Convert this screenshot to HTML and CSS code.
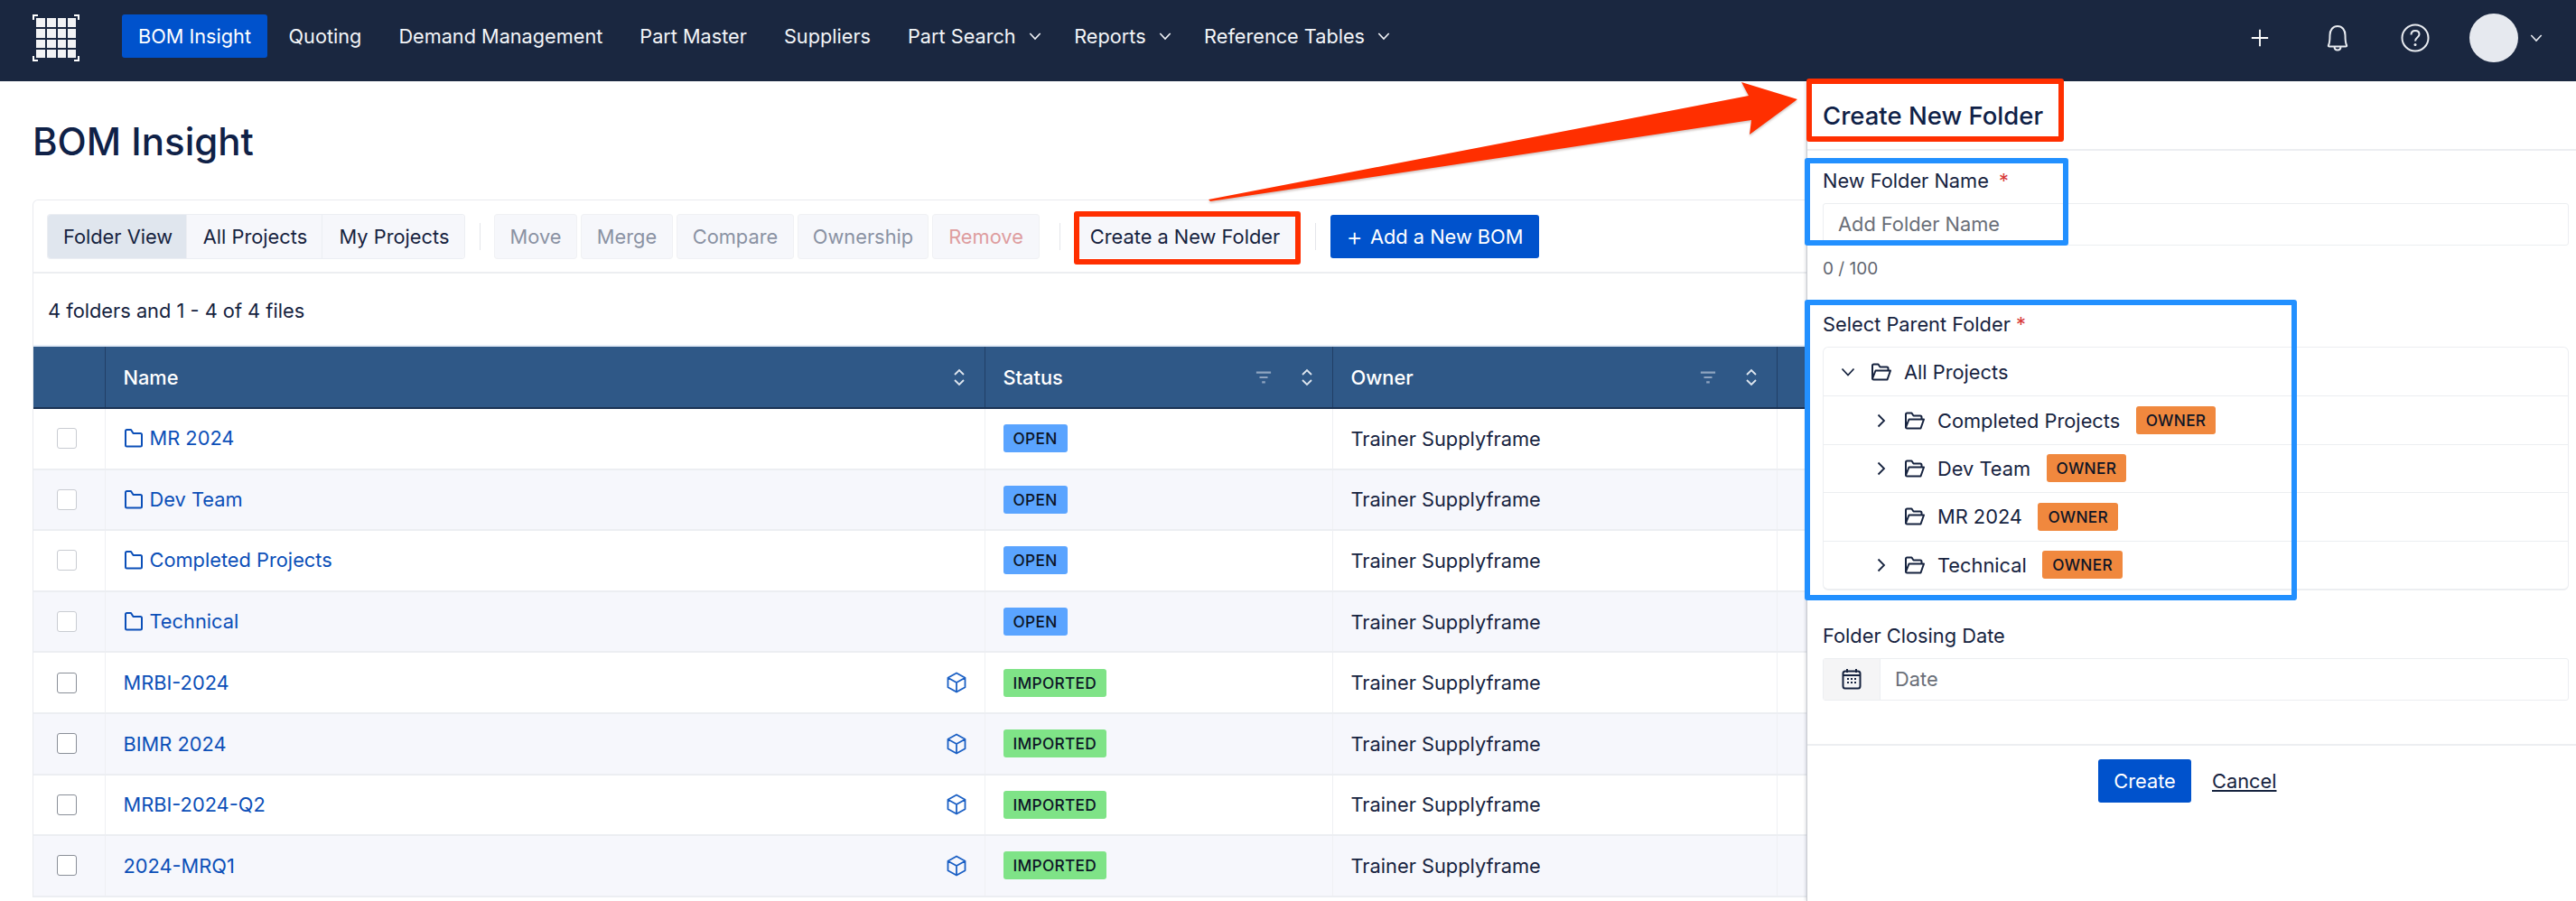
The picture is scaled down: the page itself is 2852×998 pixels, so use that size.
FILE: index.html
```html
<!DOCTYPE html>
<html lang="en">
<head>
    <meta charset="UTF-8">
    <title>BOM Insight</title>
    <link rel="stylesheet" href="styles.css">
</head>
<body>
    <svg width="0" height="0" class="defs">
        <symbol id="folder" viewBox="0 0 22 24"><path d="M2 20V4.500Q2 3 3.500 3H8L10.500 7H18.500Q20 7 20 8.500V20Q20 21.500 18.500 21.500H3.500Q2 21.500 2 20Z" fill="none" stroke="currentColor" stroke-width="2" stroke-linejoin="round"/></symbol>
        <symbol id="folder-open" viewBox="0 0 24 24"><path d="M2 19V5Q2 3.500 3.500 3.500H8.500L10.500 6.500H18Q19.500 6.500 19.500 8V10M2 19.500L5.500 10.500H22L18.500 20.500H3.500Q2 20.500 2 19Z" fill="none" stroke="currentColor" stroke-width="2" stroke-linejoin="round"/></symbol>
        <symbol id="sort" viewBox="0 0 16 20"><path d="M3 7L8 2L13 7M3 13L8 18L13 13" fill="none" stroke="currentColor" stroke-width="1.800"/></symbol>
        <symbol id="filter" viewBox="0 0 20 16"><path d="M1 2H19M5 8H15M8 14H12" fill="none" stroke="currentColor" stroke-width="2.400"/></symbol>
        <symbol id="cube" viewBox="0 0 22 24"><path d="M11 1.500L20.500 6.800V17.200L11 22.500L1.500 17.200V6.800ZM1.500 6.800L11 12L20.500 6.800M11 12V22.500" fill="none" stroke="currentColor" stroke-width="1.800" stroke-linejoin="round"/></symbol>
        <symbol id="chevron-down" viewBox="0 0 16 16"><path d="M1.500 4.500L8 11.500L14.500 4.500" fill="none" stroke="currentColor" stroke-width="1.800"/></symbol>
        <symbol id="chevron-right" viewBox="0 0 16 16"><path d="M4.500 1.500L11 8L4.500 14.500" fill="none" stroke="currentColor" stroke-width="1.800"/></symbol>
    </svg>

    <nav class="topnav">
        <svg class="logo" width="52" height="52" viewBox="0 0 52 52">
            <path d="M1 6V1H6M46 1H51V6M1 46V51H6M46 51H51V46" fill="none" stroke="#fff" stroke-width="2"/>
            <g fill="#f2f3f5">
                <rect x="4" y="4" width="10" height="10"/><rect x="16" y="4" width="10" height="10"/><rect x="28" y="4" width="9" height="10"/><rect x="39" y="4" width="9" height="10"/>
                <rect x="4" y="16" width="10" height="10"/><rect x="16" y="16" width="10" height="10"/><rect x="28" y="16" width="9" height="10"/><rect x="39" y="16" width="9" height="10"/>
                <rect x="4" y="28" width="10" height="9"/><rect x="16" y="28" width="10" height="9"/><rect x="28" y="28" width="9" height="9"/><rect x="39" y="28" width="9" height="9"/>
                <rect x="4" y="39" width="10" height="9"/><rect x="16" y="39" width="10" height="9"/><rect x="28" y="39" width="9" height="9"/><rect x="39" y="39" width="9" height="9"/>
            </g>
        </svg>
        <a class="nav-item active">BOM Insight</a>
        <a class="nav-item">Quoting</a>
        <a class="nav-item">Demand Management</a>
        <a class="nav-item">Part Master</a>
        <a class="nav-item">Suppliers</a>
        <a class="nav-item has-menu">Part Search <svg class="nav-caret"><use href="#chevron-down"/></svg></a>
        <a class="nav-item has-menu">Reports <svg class="nav-caret"><use href="#chevron-down"/></svg></a>
        <a class="nav-item has-menu">Reference Tables <svg class="nav-caret"><use href="#chevron-down"/></svg></a>
        <div class="nav-right">
            <svg class="nav-icon" viewBox="0 0 24 24"><path d="M12 2V22M2 12H22" fill="none" stroke="#fff" stroke-width="2"/></svg>
            <svg class="nav-icon bell" viewBox="0 0 28 32"><path d="M4 24C5.500 21 5.500 17 5.500 13C5.500 7 9 3 14 3S22.500 7 22.500 13C22.500 17 22.500 21 24 24C24.500 25 24 25.500 23 25.500H5C4 25.500 3.500 25 4 24ZM10.500 25.500C10.500 28 12 29.500 14 29.500S17.500 28 17.500 25.500" fill="none" stroke="#e8ebf0" stroke-width="2"/></svg>
            <svg class="nav-icon help" viewBox="0 0 32 32"><circle cx="16" cy="16" r="14.500" fill="none" stroke="#e8ebf0" stroke-width="2"/><path d="M11.500 12.500C11.500 9.500 13.500 8 16 8S20.500 9.500 20.500 12C20.500 15.500 16 15.500 16 19.500" fill="none" stroke="#e8ebf0" stroke-width="2"/><circle cx="16" cy="23.500" r="1.500" fill="#e8ebf0"/></svg>
            <span class="avatar"></span>
            <svg class="avatar-caret"><use href="#chevron-down"/></svg>
        </div>
    </nav>

    <main class="content">
        <h1>BOM Insight</h1>
        <section class="card">
            <div class="toolbar">
                <div class="segment">
                    <button class="seg-btn selected">Folder View</button>
                    <button class="seg-btn">All Projects</button>
                    <button class="seg-btn">My Projects</button>
                </div>
                <span class="sep first"></span>
                <button class="btn disabled w-move">Move</button>
                <button class="btn disabled w-merge">Merge</button>
                <button class="btn disabled w-compare">Compare</button>
                <button class="btn disabled w-owner">Ownership</button>
                <button class="btn disabled danger w-remove">Remove</button>
                <span class="sep second"></span>
                <button class="btn w-create">Create a New Folder</button>
                <span class="sep third"></span>
                <button class="btn primary w-add"><span class="plus">+</span> Add a New BOM</button>
            </div>
            <p class="count">4 folders and 1 - 4 of 4 files</p>
            <table class="grid">
                <colgroup>
                    <col class="col-check"><col class="col-name"><col class="col-status"><col class="col-owner"><col class="col-rest">
                </colgroup>
                <thead>
                    <tr>
                        <th></th>
                        <th><div class="th-inner">Name<svg class="sort"><use href="#sort"/></svg></div></th>
                        <th><div class="th-inner">Status<svg class="filter"><use href="#filter"/></svg><svg class="sort"><use href="#sort"/></svg></div></th>
                        <th><div class="th-inner">Owner<svg class="filter"><use href="#filter"/></svg><svg class="sort"><use href="#sort"/></svg></div></th>
                        <th></th>
                    </tr>
                </thead>
                <tbody>
                    <tr>
                        <td class="center"><span class="check muted"></span></td>
                        <td><a class="link dir"><svg class="folder-link"><use href="#folder"/></svg>MR 2024</a></td>
                        <td><span class="badge open">OPEN</span></td>
                        <td>Trainer Supplyframe</td><td></td>
                    </tr>
                    <tr>
                        <td class="center"><span class="check muted"></span></td>
                        <td><a class="link dir"><svg class="folder-link"><use href="#folder"/></svg>Dev Team</a></td>
                        <td><span class="badge open">OPEN</span></td>
                        <td>Trainer Supplyframe</td><td></td>
                    </tr>
                    <tr>
                        <td class="center"><span class="check muted"></span></td>
                        <td><a class="link dir"><svg class="folder-link"><use href="#folder"/></svg>Completed Projects</a></td>
                        <td><span class="badge open">OPEN</span></td>
                        <td>Trainer Supplyframe</td><td></td>
                    </tr>
                    <tr>
                        <td class="center"><span class="check muted"></span></td>
                        <td><a class="link dir"><svg class="folder-link"><use href="#folder"/></svg>Technical</a></td>
                        <td><span class="badge open">OPEN</span></td>
                        <td>Trainer Supplyframe</td><td></td>
                    </tr>
                    <tr>
                        <td class="center"><span class="check"></span></td>
                        <td><div class="file-cell"><a class="link">MRBI-2024</a><svg class="cube"><use href="#cube"/></svg></div></td>
                        <td><span class="badge imported">IMPORTED</span></td>
                        <td>Trainer Supplyframe</td><td></td>
                    </tr>
                    <tr>
                        <td class="center"><span class="check"></span></td>
                        <td><div class="file-cell"><a class="link">BIMR 2024</a><svg class="cube"><use href="#cube"/></svg></div></td>
                        <td><span class="badge imported">IMPORTED</span></td>
                        <td>Trainer Supplyframe</td><td></td>
                    </tr>
                    <tr>
                        <td class="center"><span class="check"></span></td>
                        <td><div class="file-cell"><a class="link">MRBI-2024-Q2</a><svg class="cube"><use href="#cube"/></svg></div></td>
                        <td><span class="badge imported">IMPORTED</span></td>
                        <td>Trainer Supplyframe</td><td></td>
                    </tr>
                    <tr>
                        <td class="center"><span class="check"></span></td>
                        <td><div class="file-cell"><a class="link">2024-MRQ1</a><svg class="cube"><use href="#cube"/></svg></div></td>
                        <td><span class="badge imported">IMPORTED</span></td>
                        <td>Trainer Supplyframe</td><td></td>
                    </tr>
                </tbody>
            </table>
        </section>
    </main>

    <aside class="drawer">
        <h2 class="drawer-title">Create New Folder</h2>
        <div class="drawer-body">
            <label class="field-label">New Folder Name <span class="req">*</span></label>
            <div class="input">Add Folder Name</div>
            <p class="hint">0 / 100</p>

            <label class="field-label parent-label">Select Parent Folder <span class="req tight">*</span></label>
            <div class="tree">
                <div class="tree-row top">
                    <svg class="tree-caret"><use href="#chevron-down"/></svg>
                    <svg class="tree-folder"><use href="#folder-open"/></svg>
                    All Projects
                </div>
                <div class="tree-row">
                    <svg class="tree-caret"><use href="#chevron-right"/></svg>
                    <svg class="tree-folder"><use href="#folder-open"/></svg>
                    Completed Projects <span class="badge owner">OWNER</span>
                </div>
                <div class="tree-row">
                    <svg class="tree-caret"><use href="#chevron-right"/></svg>
                    <svg class="tree-folder"><use href="#folder-open"/></svg>
                    Dev Team <span class="badge owner">OWNER</span>
                </div>
                <div class="tree-row">
                    <span class="tree-caret"></span>
                    <svg class="tree-folder"><use href="#folder-open"/></svg>
                    MR 2024 <span class="badge owner">OWNER</span>
                </div>
                <div class="tree-row">
                    <svg class="tree-caret"><use href="#chevron-right"/></svg>
                    <svg class="tree-folder"><use href="#folder-open"/></svg>
                    Technical <span class="badge owner">OWNER</span>
                </div>
            </div>

            <label class="field-label date-label">Folder Closing Date</label>
            <div class="date-input">
                <span class="addon">
                    <svg width="22" height="24" viewBox="0 0 22 24"><path d="M6 1V5M16 1V5" stroke="#16233f" stroke-width="2"/><rect x="1.500" y="3.500" width="19" height="19" rx="2.500" fill="none" stroke="#16233f" stroke-width="2"/><path d="M2 8H20" stroke="#16233f" stroke-width="2"/><path d="M6 12H8M10 12H12M14 12H16M6 16H8M10 16H12M14 16H16" stroke="#16233f" stroke-width="2"/></svg>
                </span>
                <span class="date-text">Date</span>
            </div>
        </div>
        <div class="drawer-foot">
            <button class="btn primary w-submit">Create</button>
            <a class="cancel">Cancel</a>
        </div>
    </aside>

    <!-- annotations drawn on top of the screenshot -->
    <svg class="arrow" width="700" height="150" viewBox="0 0 700 150">
        <polygon points="8,131 606,16 598,1 660,20 607,59 609,43 10,133" fill="#ff2f00"/>
    </svg>
    <span class="mark mark-red mark-btn"></span>
    <span class="mark mark-red mark-title"></span>
    <span class="mark mark-blue mark-name"></span>
    <span class="mark mark-blue mark-tree"></span>
</body>
</html>
```
FILE: styles.css
```css
* {
    box-sizing: border-box;
}
html, body {
    margin: 0;
    height: 998px;
    overflow: hidden;
}
body {
    font-family: Inter, "Noto Sans", sans-serif;
    font-size: 21.800px;
    color: #16233f;
    background: #fff;
    position: relative;
}
.defs {
    position: absolute;
}
.topnav {
    height: 90px;
    background: #1a2740;
    display: flex;
    align-items: flex-start;
    padding: 16px 0 0 36px;
}
.logo {
    margin-right: 47px;
}
.nav-item {
    height: 48px;
    display: flex;
    align-items: center;
    color: #f3f5f8;
    font-size: 21.700px;
    padding: 0 20.500px;
    border-radius: 3px;
    white-space: nowrap;
}
.nav-item.active {
    width: 161px;
    justify-content: center;
    background: #0052cc;
    color: #fff;
    padding: 0;
    margin-right: 3px;
}
.nav-item.has-menu {
    padding-right: 16px;
}
.nav-caret {
    width: 14px;
    height: 14px;
    margin-left: 14px;
    color: #f3f5f8;
}
.nav-right {
    margin-left: auto;
    display: flex;
    align-items: center;
    height: 54px;
    margin-top: -1px;
    padding-right: 37px;
}
.nav-icon {
    width: 22px;
    height: 22px;
    margin-right: 61px;
}
.bell {
    width: 28px;
    height: 32px;
    margin-right: 56px;
}
.help {
    width: 32px;
    height: 32px;
    margin-right: 44px;
}
.avatar {
    width: 54px;
    height: 54px;
    border-radius: 50%;
    background: #e6e9ef;
}
.avatar-caret {
    width: 14px;
    height: 14px;
    margin-left: 13px;
    color: #e8ebf0;
}

.content {
    padding: 0 0 0 36px;
}
h1 {
    margin: 0;
    height: 131px;
    padding-top: 37px;
    font-size: 42px;
    line-height: 60px;
    font-weight: 500;
    color: #0f2147;
}
.card {
    width: 2816px;
    border: 1px solid #e9ebef;
    border-bottom: 0;
    border-radius: 6px 0 0 0;
}
.toolbar {
    height: 81px;
    padding: 16px 0 0 16px;
    display: flex;
    align-items: flex-start;
    border-bottom: 2px solid #eceef1;
}
.segment {
    display: flex;
    height: 48px;
    border-radius: 3px;
    overflow: hidden;
    box-shadow: 0 0 0 1px #eceef3;
}
.seg-btn, .btn {
    font-family: inherit;
    font-size: 21.800px;
    color: #16233f;
    border: 0;
    background: #f6f7fb;
    padding: 0;
    height: 48px;
    white-space: nowrap;
}
.seg-btn {
    width: 150px;
    border-right: 1px solid #eceef3;
    padding-left: 2px;
}
.seg-btn.selected {
    width: 154px;
    background: #e0e6ee;
}
.seg-btn:last-child {
    width: 157px;
    border-right: 0;
}
.sep {
    width: 1px;
    height: 30px;
    margin-top: 9px;
    background: #e4e6ea;
}
.sep.first {
    margin: 9px 16px 0 17px;
}
.sep.second {
    margin: 9px 20px 0 23px;
}
.sep.third {
    margin: 9px 16px 0 22px;
}
.btn {
    border-radius: 3px;
}
.disabled {
    color: #8a92a3;
    box-shadow: 0 0 0 1px #f0f1f4;
    margin-right: 6px;
}
.disabled.danger {
    color: #de9d9f;
    margin-right: 0;
}
.primary {
    background: #0052cc;
    color: #fff;
}
.plus {
    font-size: 28px;
    line-height: 20px;
    font-weight: 300;
    margin-right: 2px;
    vertical-align: -2px;
}
.w-move { width: 90px; }
.w-merge { width: 100px; }
.w-compare { width: 128px; }
.w-owner { width: 143px; }
.w-remove { width: 117px; }
.w-create { width: 240px; padding-right: 4px; }
.w-add { width: 231px; }
.w-submit { width: 103px; }

.count {
    margin: 0;
    height: 79px;
    line-height: 82px;
    padding-left: 16px;
}
.grid {
    width: 100%;
    table-layout: fixed;
    border-collapse: collapse;
}
.col-check { width: 79px; }
.col-name { width: 974px; }
.col-status { width: 385px; }
.col-owner { width: 492px; }
.grid th {
    height: 69px;
    background: #2f5887;
    color: #fff;
    font-weight: 500;
    text-align: left;
    padding: 0 20px;
    border-left: 1px solid #213f66;
    border-top: 2px solid #e6eef8;
    border-bottom: 2px solid #1b3354;
}
.grid th:first-child {
    border-left: 0;
}
.th-inner {
    display: flex;
    align-items: center;
}
.sort {
    width: 16px;
    height: 20px;
    margin-left: 24px;
    color: #dfe6ef;
}
.filter {
    width: 18px;
    height: 16px;
    margin-left: auto;
    margin-right: 7px;
    color: #8fa4c0;
}
.th-inner > .sort:nth-child(1) {
    margin-left: auto;
}
.grid td {
    height: 67.600px;
    padding: 0 20px;
    border-left: 1px solid #eff0f3;
    border-bottom: 2px solid #eceef2;
}
.grid td:first-child {
    border-left: 0;
}
.grid tbody tr:nth-child(even) td {
    background: #f6f7fc;
}
.grid td.center {
    padding: 0 23px 0 18px;
    line-height: 0;
}
.check {
    display: block;
    width: 22px;
    height: 23px;
    margin: 0 auto;
    border: 1px solid #8a8f98;
    border-radius: 3px;
    background: #fff;
}
.check.muted {
    border-color: #c9ccd2;
}
.link {
    color: #0b4fb8;
    display: inline-flex;
    align-items: center;
}
.link.dir {
    padding-top: 3px;
}
.folder-link {
    width: 22px;
    height: 24px;
    margin-right: 7px;
}
.file-cell {
    display: flex;
    align-items: center;
    justify-content: space-between;
}
.cube {
    width: 22px;
    height: 24px;
    color: #1a5fc4;
}
.badge {
    display: inline-block;
    height: 31px;
    line-height: 31px;
    padding: 0 11px;
    font-size: 17.300px;
    font-weight: 500;
    color: #0d1526;
    border-radius: 3px;
    letter-spacing: 0.3px;
}
.open {
    background: #5aa4ff;
}
.imported {
    background: #7fe387;
}
.owner {
    background: #f0883e;
    margin-left: 17.500px;
}

.drawer {
    position: absolute;
    top: 90px;
    left: 2000px;
    width: 852px;
    height: 908px;
    background: #fff;
    border-left: 1px solid #c9ccd2;
    box-shadow: -1px 0 3px rgba(40, 50, 70, 0.18);
}
.drawer-title {
    margin: 0;
    height: 77px;
    padding: 20px 0 0 17px;
    font-size: 27.500px;
    line-height: 36px;
    font-weight: 500;
    color: #0f2147;
    border-bottom: 2px solid #eceef1;
}
.drawer-body {
    padding: 21px 8px 0 17px;
}
.field-label {
    display: block;
    line-height: 24px;
    height: 24px;
}
.req {
    color: #d83a3a;
    margin-left: 5px;
}
.req.tight {
    margin-left: 0;
}
.input {
    margin-top: 13px;
    height: 47px;
    line-height: 44px;
    padding-left: 16px;
    color: #6a6f78;
    border: 1px solid #eceef1;
    border-radius: 3px;
}
.hint {
    margin: 14px 0 0;
    height: 24px;
    line-height: 24px;
    font-size: 19px;
    color: #5f6570;
}
.parent-label {
    margin-top: 37px;
}
.tree {
    margin-top: 13px;
    border: 1px solid #eceef1;
    border-bottom-width: 2px;
    border-radius: 6px;
}
.tree-row {
    height: 53.400px;
    display: flex;
    align-items: center;
    padding-left: 56px;
    border-top: 1px solid #eceef1;
    white-space: nowrap;
}
.tree-row.top {
    border-top: 0;
    padding-left: 19px;
}
.tree-caret {
    display: inline-block;
    width: 16px;
    height: 16px;
    margin-right: 17px;
}
.tree-folder {
    width: 24px;
    height: 24px;
    margin-right: 13px;
}
.date-label {
    margin-top: 38px;
}
.date-input {
    margin-top: 13px;
    height: 47px;
    display: flex;
    align-items: center;
    border: 1px solid #eceef1;
    border-radius: 3px;
}
.addon {
    width: 63px;
    height: 100%;
    display: flex;
    align-items: center;
    justify-content: center;
    background: #f5f5f6;
    border-right: 1px solid #eceef1;
}
.date-text {
    padding-left: 16px;
    color: #6a6f78;
}
.drawer-foot {
    margin-top: 48px;
    height: 80px;
    border-top: 2px solid #eceef1;
    padding-top: 15px;
    display: flex;
    align-items: flex-start;
    padding-left: 322px;
}
.cancel {
    margin-left: 23px;
    line-height: 48px;
    text-decoration: underline;
    color: #16233f;
}

.arrow {
    position: absolute;
    left: 1330px;
    top: 90px;
    filter: drop-shadow(0 2px 1px rgba(80, 40, 30, 0.25));
}
.mark {
    position: absolute;
    border-style: solid;
    border-width: 6px;
    border-radius: 3px;
}
.mark-red {
    border-color: #ff2f00;
}
.mark-blue {
    border-color: #2290ff;
}
.mark-btn {
    left: 1189px;
    top: 234px;
    width: 251px;
    height: 59px;
}
.mark-title {
    left: 2000px;
    top: 87px;
    width: 285px;
    height: 70px;
}
.mark-name {
    left: 1998px;
    top: 175px;
    width: 292px;
    height: 97px;
}
.mark-tree {
    left: 1998px;
    top: 332px;
    width: 545px;
    height: 333px;
}
```
